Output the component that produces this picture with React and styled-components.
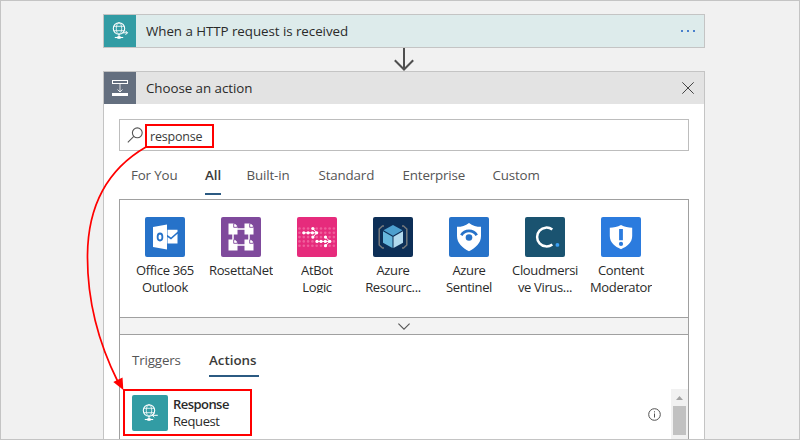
import React from "react";
import styled, { createGlobalStyle } from "styled-components";

const GlobalStyle = createGlobalStyle`
  *, *::before, *::after { box-sizing: border-box; }
  body { margin: 0; overflow: hidden; }
`;

const Canvas = styled.main`
  position: relative;
  width: 800px;
  height: 440px;
  overflow: hidden;
  display: flex;
  flex-direction: column;
  align-items: center;
  padding: 13px 0 0 8px;
  background: #f1f1f1;
  border: 1px solid #c4c4c4;
  font-family: "Open Sans", "Noto Sans", sans-serif;
  font-size: 13.35px;
  letter-spacing: -0.05px;
  color: #2b2b2b;

  svg { display: block; }
`;

const TriggerCard = styled.section`
  width: 602px;
  height: 34px;
  flex: none;
  display: flex;
  background: #ddebeb;
  border: 1px solid #c4c4c4;
`;

const HeaderIcon = styled.div`
  width: 32px;
  height: 32px;
  flex: none;
  display: grid;
  place-items: center;
  background: ${(p) => p.$color};
`;

const HeaderTitle = styled.h1`
  flex: 1;
  margin: 0;
  padding-left: 10px;
  font-size: inherit;
  font-weight: 400;
  line-height: 33px;
  color: #2a2a2a;
`;

const HeaderButton = styled.button`
  width: 32px;
  height: 32px;
  padding: 0;
  border: 0;
  background: none;
  display: grid;
  place-items: center;
`;

const Connector = styled.div`
  height: 23px;
  flex: none;
`;

const ActionCard = styled.section`
  width: 602px;
  height: 400px;
  flex: none;
  background: #fff;
  border: 1px solid #c4c4c4;
`;

const CardHeader = styled.header`
  display: flex;
  height: 32px;
  background: #e3e3e3;
`;

const CardBody = styled.div`
  padding: 15px;
`;

const SearchField = styled.div`
  display: flex;
  height: 32px;
  border: 1px solid #bdbdbd;
  padding: 7px 0 0 7px;
`;

const SearchText = styled.span`
  padding-left: 7px;
  font-size: 12.5px;
  letter-spacing: -0.2px;
  line-height: 20px;
  color: #3a3a3a;
`;

const FilterTabs = styled.nav`
  display: grid;
  grid-template-columns: 74px 41.5px 72px 84px 90px auto;
  padding: 14px 0 0 12px;
  height: 48px;
`;

const Tab = styled.span`
  justify-self: start;
  height: ${(p) => p.$height}px;
  line-height: 20px;
  letter-spacing: ${(p) => (p.$active ? 0 : -0.15)}px;
  white-space: nowrap;
  color: ${(p) => (p.$active ? "#3a3a3a" : "#555")};
  font-weight: ${(p) => (p.$active ? 600 : 400)};
  border-bottom: 2px solid ${(p) => (p.$active ? "#2b5a82" : "transparent")};
`;

const ActiveResultTab = styled(Tab)`
  padding-right: 2px;
`;

const Panel = styled.div`
  border: 1px solid #a0a0a0;
  height: 300px;
`;

const Connectors = styled.div`
  display: flex;
  padding: 17px 0 0 7px;
  height: 117px;
`;

const ConnectorTile = styled.div`
  width: 76px;
  display: flex;
  flex-direction: column;
  align-items: center;
`;

const ConnectorIcon = styled.div`
  width: 40px;
  height: 40px;
  border-radius: 2px;
  overflow: hidden;
  background: ${(p) => p.$color};
`;

const ConnectorName = styled.div`
  height: 31px;
  margin-top: 5px;
  overflow: hidden;
  text-align: center;
  white-space: pre;
  font-size: 13px;
  letter-spacing: -0.35px;
  line-height: 17px;
  color: #2a2a2a;
`;

const Expander = styled.div`
  height: 18px;
  display: grid;
  place-items: center;
  background: #f3f3f3;
  border: 1px solid #a0a0a0;
  border-width: 1px 0;
`;

const ResultTabs = styled.nav`
  display: grid;
  grid-template-columns: 77px auto;
  padding: 15px 0 0 12px;
  height: 54px;
`;

const Results = styled.div`
  display: flex;
  height: 60px;
`;

const ResultRow = styled.div`
  flex: 1;
  display: flex;
  padding: 6px 10px 0 12px;
`;

const ResultIcon = styled.div`
  width: 36px;
  height: 36px;
  border-radius: 2px;
  display: grid;
  place-items: center;
  background: #329ca4;
`;

const ResultText = styled.div`
  flex: 1;
  padding-left: 5px;
  font-size: 13px;
  letter-spacing: -0.4px;
  line-height: 17px;
  color: #2a2a2a;
`;

const ResultName = styled.div`
  font-weight: 600;
  letter-spacing: -0.55px;
  margin-top: 1px;
`;

const InfoSlot = styled.div`
  padding-top: 13px;
`;

const Scrollbar = styled.div`
  width: 17px;
  display: flex;
  flex-direction: column;
  align-items: center;
  background: #f1f1f1;
`;

const ScrollThumb = styled.div`
  width: 13px;
  height: 29px;
  background: #c1c1c1;
`;

const Annotations = styled.div`
  position: absolute;
  inset: -1px;
  pointer-events: none;
`;

const Highlight = styled.div`
  position: absolute;
  left: ${(p) => p.$x}px;
  top: ${(p) => p.$y}px;
  width: ${(p) => p.$w}px;
  height: ${(p) => p.$h}px;
  border: 2px solid #f00;
`;

function GlobeIcon({ outgoing }) {
  return (
    <svg width="18" height="20" viewBox="0 0 18 20" fill="none" stroke="#fff" strokeWidth="1">
      <circle cx="8" cy="7.5" r="5.7" strokeWidth="1.1" />
      <ellipse cx="8" cy="7.5" rx="2.7" ry="5.7" opacity=".8" />
      <path d="M2.8 5.3h10.4M2.8 9.7h10.4" opacity=".8" />
      <path d="M8 13.3v3" />
      <path d="M3.8 16.5h8.4" strokeWidth="1.1" />
      <path d="M6.4 16.5h3.2" strokeWidth="2.6" />
      {outgoing ? (
        <path d="M11.5 11.8h5M14.5 9.8l2 2-2 2" />
      ) : (
        <path d="M11.3 12.3h5.5M13.2 10.3l-2 2 2 2" />
      )}
    </svg>
  );
}

function InsertStepIcon() {
  return (
    <svg width="18" height="18" viewBox="0 0 18 18" fill="none" stroke="#fff">
      <rect x="1.5" y="1.5" width="15" height="3" />
      <path d="M9 5v8M6.5 10.5L9 13l2.5-2.5" strokeOpacity=".8" />
      <path d="M1 15.5h16" strokeWidth="3" />
    </svg>
  );
}

function OutlookIcon() {
  return (
    <svg width="40" height="40" viewBox="0 0 40 40" fill="#fff">
      <path d="M8 10l14-2.5v25L8 30z" />
      <path d="M22.5 12.8H32.5v2l-6.5 5.8-3.5-2.6z" />
      <path d="M22.5 20l3.500 2.400 6.500-5.700V26.500H22.500z" />
      <ellipse cx="15" cy="20" rx="2.400" ry="3.500" fill="none" stroke="#2672c9" strokeWidth="1.800" />
    </svg>
  );
}

const DocShape = ({ x, y }) => (
  <g transform={`translate(${x} ${y})`}>
    <path d="M0 0h5.2L9 3.8V11H0z" fill="#fff" />
    <path d="M5.2 0v3.800h3.800" fill="none" stroke="#7f4a9c" strokeWidth=".9" />
    <path d="M6.200 0v2.800h2.800z" fill="#fff" />
  </g>
);

function RosettaIcon() {
  return (
    <svg width="40" height="40" viewBox="0 0 40 40">
      <path d="M12 12h16v16H12z" fill="none" stroke="#fff" strokeWidth="1.5" />
      <DocShape x={7.5} y={6.5} />
      <DocShape x={23.5} y={6.5} />
      <DocShape x={7.5} y={22.5} />
      <DocShape x={23.5} y={22.5} />
    </svg>
  );
}

const GRID_COLS = [2.5, 6.8, 11.1, 15.4, 19.7, 24, 28.3, 32.6, 36.9];
const GRID_ROWS = [11.5, 15.8, 20.1, 24.4, 28.7];
const LIT_DOTS = [
  [6.8, 15.8], [11.1, 15.8], [15.4, 15.8], [19.7, 15.8], [15.9, 11.5], [15.9, 20.1],
  [20, 24.4], [24, 24.4], [28.3, 24.4], [32.8, 24.4], [28.5, 20.1], [28.5, 28.7],
];

function AtBotIcon() {
  return (
    <svg width="40" height="40" viewBox="0 0 40 40">
      <g fill="#ef5f9c">
        {GRID_ROWS.map((y) => GRID_COLS.map((x) => <circle key={`${x}-${y}`} cx={x} cy={y} r="1.300" />))}
      </g>
      <path
        d="M7 15.800h13M15.900 11.500l3.900 4.300-3.900 4.300M20 24.400h13M28.500 20.100l4.300 4.300-4.300 4.300"
        fill="none"
        stroke="#fff"
        strokeWidth="1"
      />
      <g fill="#fff">
        {LIT_DOTS.map(([x, y]) => <circle key={`${x}-${y}`} cx={x} cy={y} r="1.600" />)}
      </g>
    </svg>
  );
}

function ResourceIcon() {
  return (
    <svg width="40" height="40" viewBox="0 0 40 40">
      <path
        d="M11 9H9.500L6.200 12v16l3.300 3H11M29 9h1.500l3.300 3v16l-3.300 3H29"
        fill="none"
        stroke="#75797c"
        strokeWidth="1.500"
      />
      <path d="M20 8l9.500 5.300L20 18.800l-9.500-5.500z" fill="#4d9fce" />
      <path d="M10 14.300l9.500 5.400V31L10 25.700z" fill="#67b7dd" />
      <path d="M30 14.300l-9.500 5.400V31l9.500-5.300z" fill="#b2daee" />
    </svg>
  );
}

function SentinelIcon() {
  return (
    <svg width="40" height="40" viewBox="0 0 40 40">
      <path d="M20 6c3.500 3 7.500 3.800 12 3.800V19c0 7-5.500 12-12 15.300C13.500 31 8 26 8 19V9.800C12.500 9.800 16.500 9 20 6z" fill="#fff" />
      <path d="M12.300 18.200a9 9 0 0 1 15.400 0" fill="none" stroke="#2672c9" strokeWidth="2.800" />
      <circle cx="20" cy="20.500" r="3.300" fill="#2672c9" />
    </svg>
  );
}

function CloudmersiveIcon() {
  return (
    <svg width="40" height="40" viewBox="0 0 40 40">
      <path d="M27.300 12.600A9.400 9.400 0 1 0 27.300 27.400" fill="none" stroke="#fff" strokeWidth="2.500" />
      <circle cx="32.400" cy="27.900" r="1.900" fill="#3ba0f4" />
    </svg>
  );
}

function ModeratorIcon() {
  return (
    <svg width="40" height="40" viewBox="0 0 40 40">
      <path d="M20 8c3.500 2 7.300 2.700 11.200 2.700V19c0 6.500-5 10.500-11.200 13.200C13.800 29.500 8.800 25.500 8.800 19v-8.300C12.700 10.700 16.500 10 20 8z" fill="#fff" />
      <path d="M18.100 12h3.800v11.300h-3.800z" fill="#2b7bde" />
      <circle cx="20" cy="26.900" r="2.100" fill="#2b7bde" />
    </svg>
  );
}

const CONNECTORS = [
  { name: "Office 365\nOutlook", color: "#2672c9", Icon: OutlookIcon },
  { name: "RosettaNet", color: "#7f4a9c", Icon: RosettaIcon },
  { name: "AtBot\nLogic", color: "#e62b7c", Icon: AtBotIcon },
  { name: "Azure\nResourc...", color: "#0d2f57", Icon: ResourceIcon },
  { name: "Azure\nSentinel", color: "#2672c9", Icon: SentinelIcon },
  { name: "Cloudmersi\nve Virus...", color: "#1a5370", Icon: CloudmersiveIcon },
  { name: "Content\nModerator", color: "#2b7bde", Icon: ModeratorIcon },
];

const FILTERS = ["For You", "All", "Built-in", "Standard", "Enterprise", "Custom"];

export default function App() {
  return (
    <>
      <GlobalStyle />
      <Canvas>
        <TriggerCard>
          <HeaderIcon $color="#329ca4"><GlobeIcon outgoing /></HeaderIcon>
          <HeaderTitle>When a HTTP request is received</HeaderTitle>
          <HeaderButton aria-label="More">
            <svg width="14" height="2" viewBox="0 0 14 2" fill="#4a80cc">
              <path d="M0 0h2v2H0zM6 0h2v2H6zM12 0h2v2h-2z" />
            </svg>
          </HeaderButton>
        </TriggerCard>
        <Connector>
          <svg width="20" height="23" viewBox="0 0 20 23" fill="none" stroke="#4f4f4f" strokeWidth="2">
            <path d="M10 0v22M.8 12.300l9.200 9.200 9.200-9.200" />
          </svg>
        </Connector>
        <ActionCard>
          <CardHeader>
            <HeaderIcon $color="#646f7f"><InsertStepIcon /></HeaderIcon>
            <HeaderTitle>Choose an action</HeaderTitle>
            <HeaderButton aria-label="Close">
              <svg width="12" height="12" viewBox="0 0 12 12" fill="none" stroke="#444">
                <path d="M.3.3l11.400 11.400M11.700.3L.3 11.700" />
              </svg>
            </HeaderButton>
          </CardHeader>
          <CardBody>
            <SearchField>
              <svg width="16" height="16" viewBox="0 0 16 16" fill="none" stroke="#555" strokeWidth="1.100">
                <circle cx="10.300" cy="5.800" r="4.900" />
                <path d="M6.800 9.300L.8 15.300" />
              </svg>
              <SearchText>response</SearchText>
            </SearchField>
            <FilterTabs>
              {FILTERS.map((f) => <Tab key={f} $height={30} $active={f === "All"}>{f}</Tab>)}
            </FilterTabs>
            <Panel>
              <Connectors>
                {CONNECTORS.map(({ name, color, Icon }) => (
                  <ConnectorTile key={name}>
                    <ConnectorIcon $color={color}><Icon /></ConnectorIcon>
                    <ConnectorName>{name}</ConnectorName>
                  </ConnectorTile>
                ))}
              </Connectors>
              <Expander>
                <svg width="12" height="7" viewBox="0 0 12 7" fill="none" stroke="#555" strokeWidth="1.100">
                  <path d="M.4.6L6 6.200 11.600.6" />
                </svg>
              </Expander>
              <ResultTabs>
                <Tab $height={27}>Triggers</Tab>
                <ActiveResultTab $height={27} $active>Actions</ActiveResultTab>
              </ResultTabs>
              <Results>
                <ResultRow>
                  <ResultIcon><GlobeIcon /></ResultIcon>
                  <ResultText>
                    <ResultName>Response</ResultName>
                    Request
                  </ResultText>
                  <InfoSlot>
                    <svg width="13" height="13" viewBox="0 0 13 13" fill="none" stroke="#505050">
                      <circle cx="6.500" cy="6.500" r="5.800" />
                      <path d="M6.500 5.500v4M6.500 3.300v1.100" />
                    </svg>
                  </InfoSlot>
                </ResultRow>
                <Scrollbar>
                  <svg width="17" height="17" viewBox="0 0 17 17" fill="#a3a3a3">
                    <path d="M5 11h7L8.500 7z" />
                  </svg>
                  <ScrollThumb />
                </Scrollbar>
              </Results>
            </Panel>
          </CardBody>
        </ActionCard>
        <Annotations>
          <svg width="800" height="440" viewBox="0 0 800 440">
            <path d="M146 147C108 169 88 204 87.500 255C87 307 101 348 118 382" fill="none" stroke="#f00" strokeWidth="1.700" />
            <path d="M123.300 390l-10-8 9.200-4.500z" fill="#f00" />
            <path d="M0 439.500h800" stroke="#c4c4c4" />
          </svg>
          <Highlight $x={145} $y={124} $w={69} $h={24} />
          <Highlight $x={123} $y={389} $w={129} $h={47} />
        </Annotations>
      </Canvas>
    </>
  );
}
